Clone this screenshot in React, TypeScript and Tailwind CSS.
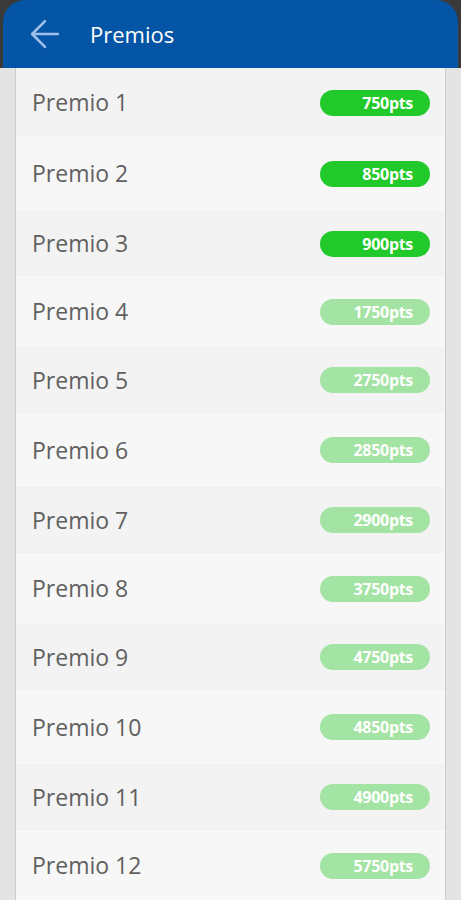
import { ArrowLeft } from "lucide-react";

type Prize = {
  name: string;
  points: number;
  unlocked: boolean;
  h: string;
};

const prizes: Prize[] = [
  { name: "Premio 1", points: 750, unlocked: true, h: "h-[70px]" },
  { name: "Premio 2", points: 850, unlocked: true, h: "h-[72px]" },
  { name: "Premio 3", points: 900, unlocked: true, h: "h-[68px]" },
  { name: "Premio 4", points: 1750, unlocked: false, h: "h-[68px]" },
  { name: "Premio 5", points: 2750, unlocked: false, h: "h-[69px]" },
  { name: "Premio 6", points: 2850, unlocked: false, h: "h-[71px]" },
  { name: "Premio 7", points: 2900, unlocked: false, h: "h-[69px]" },
  { name: "Premio 8", points: 3750, unlocked: false, h: "h-[68px]" },
  { name: "Premio 9", points: 4750, unlocked: false, h: "h-[69px]" },
  { name: "Premio 10", points: 4850, unlocked: false, h: "h-[71px]" },
  { name: "Premio 11", points: 4900, unlocked: false, h: "h-[69px]" },
  { name: "Premio 12", points: 5750, unlocked: false, h: "h-[68px]" },
];

function PrizeRow({ prize, index }: { prize: Prize; index: number }) {
  return (
    <div
      className={`flex items-center justify-between border-b border-[#fbfbfb] pl-[16px] pr-[15px] ${prize.h} ${
        index % 2 === 0 ? "bg-[#f3f3f3]" : "bg-[#f7f7f7]"
      }`}
    >
      <span className="text-[23px] font-normal text-[#606060]">{prize.name}</span>
      <span
        className={`flex h-[26px] w-[110px] items-center justify-end rounded-full pr-[17px] text-[16px] font-bold tracking-[-0.3px] text-white ${
          prize.unlocked ? "bg-[#22c92a]" : "bg-[#a3e3a3]"
        }`}
      >
        {prize.points}pts
      </span>
    </div>
  );
}

export default function App() {
  return (
    <div
      className="flex h-[900px] w-[461px] flex-col overflow-hidden bg-[#dcdcdc]"
      style={{ fontFamily: '"Open Sans", "Noto Sans", sans-serif' }}
    >
      <div className="bg-[#3a3a3a]">
        <header className="mx-[3px] flex h-[68px] items-center gap-[23px] rounded-t-[22px] bg-[#0455a5] pl-[20px]">
          <ArrowLeft size={44} strokeWidth={1.4} className="text-[#9fc0ea]" />
          <h1 className="text-[22px] font-medium text-white">Premios</h1>
        </header>
      </div>
      <div className="flex flex-1 bg-gradient-to-r from-[#e4e4e4] via-[#d6d6d6] to-[#e4e4e4] px-[15px]">
        <div className="flex flex-1 flex-col overflow-hidden border-x border-[#cccccc]">
          {prizes.map((p, i) => (
            <PrizeRow key={p.name} prize={p} index={i} />
          ))}
        </div>
      </div>
    </div>
  );
}
